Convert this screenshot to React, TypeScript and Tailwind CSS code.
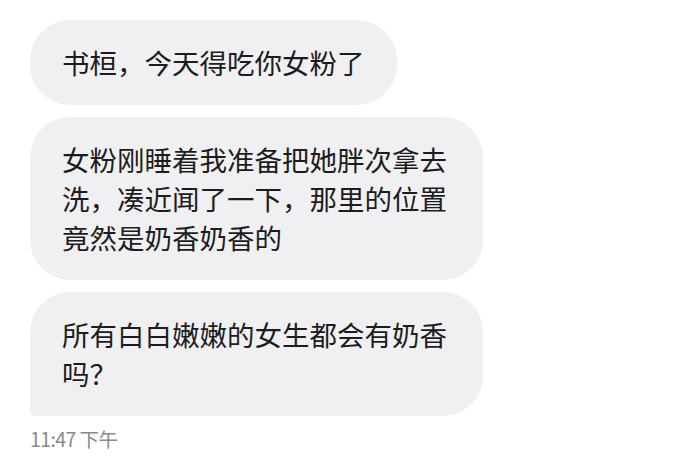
const messages = [
  '书桓，今天得吃你女粉了',
  '女粉刚睡着我准备把她胖次拿去洗，凑近闻了一下，那里的位置竟然是奶香奶香的',
  '所有白白嫩嫩的女生都会有奶香吗？',
];

export default function App() {
  return (
    <div
      className="w-[680px] h-[458px] bg-white pl-[30px] pt-[20px] overflow-hidden"
      style={{ fontFamily: '"Noto Sans CJK SC", "Noto Sans", sans-serif' }}
    >
      <div className="flex flex-col items-start gap-[12px]">
        {messages.map((m, i) => (
          <div
            key={i}
            className={
              i === messages.length - 1
                ? 'max-w-[453px] bg-[#f0f0f2] rounded-[40px] rounded-bl-[5px] px-[32px] py-[23px] text-[27.5px] leading-[39px] text-[#1c1c1e]'
                : 'max-w-[453px] bg-[#f0f0f2] rounded-[40px] px-[32px] py-[23px] text-[27.5px] leading-[39px] text-[#1c1c1e]'
            }
          >
            {m}
          </div>
        ))}
      </div>
      <div className="mt-[11px] text-[19.5px] leading-[24px] text-[#8a8a8e] tracking-[-0.6px]">
        11:47 下午
      </div>
    </div>
  );
}
